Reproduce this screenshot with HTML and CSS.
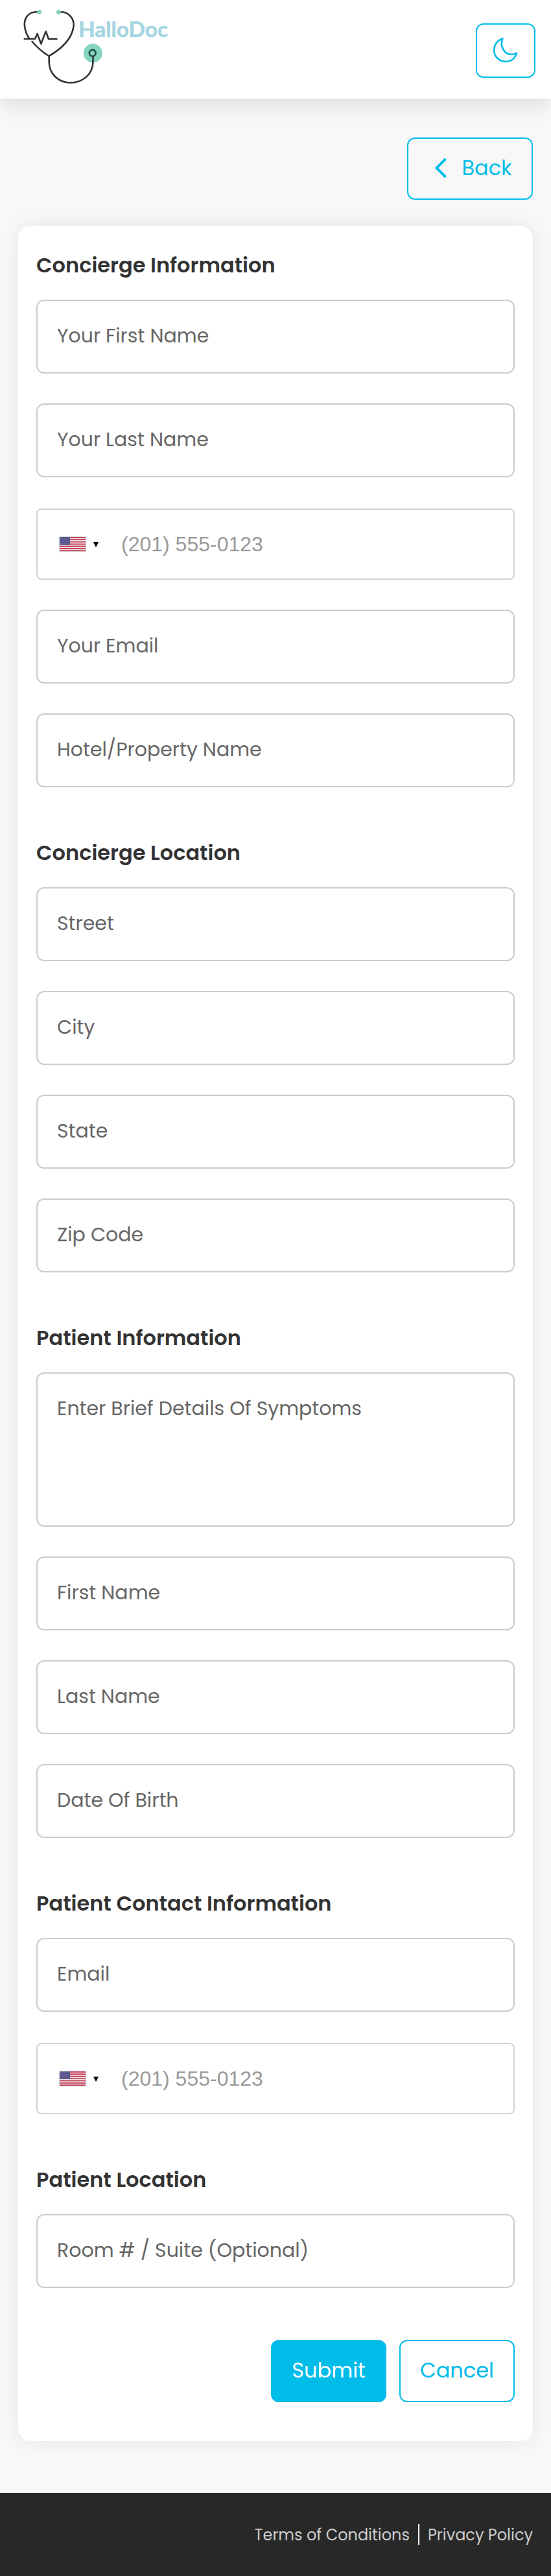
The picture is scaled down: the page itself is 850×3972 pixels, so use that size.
FILE: index.html
```html
<!DOCTYPE html>
<html lang="en">
<head>
<meta charset="utf-8">
<title>HalloDoc</title>
<link rel="stylesheet" href="styles.css">
</head>
<body>
<svg width="0" height="0" class="defs">
  <symbol id="flag-us" viewBox="0 0 40 22">
    <rect width="40" height="22" fill="#f3e6e8"/>
    <path d="M0 .85h40M0 4.2h40M0 7.6h40M0 11h40M0 14.4h40M0 17.8h40M0 21.15h40" stroke="#c03850" stroke-width="1.7"/>
    <rect width="16" height="12" fill="#54528a"/>
    <path d="M1 2h15M2 4h14M1 6h15M2 8h14M1 10h15" stroke="#8583ab" stroke-width="1" stroke-dasharray="1 2"/>
  </symbol>
</svg>
<header class="header">
  <svg class="logo" width="270" height="136" viewBox="0 0 270 136" fill="none">
    <circle cx="143.300" cy="82" r="14.500" fill="#84d5bf"/>
    <g stroke="#333" stroke-width="2.600" stroke-linecap="round" stroke-linejoin="round">
      <path d="M58 18.300C43 18 36 29 38.200 42C39.300 49 42 55 45.500 60"/>
      <path d="M93 18.300C107 18 115 30 113.500 41C111 58 97 74 75.500 86.500C65 80 57 73 49.500 64"/>
      <path d="M37.800 60H54L57.500 52L63.300 67.500L70.700 48.500L75 60.300H87.500"/>
      <path d="M75.700 86.500V95C75.700 115 91 127.500 109 127.500C128 127.500 143.500 114 143.500 95V87.500"/>
    </g>
    <circle cx="142.700" cy="81.800" r="4.900" stroke="#204c43" stroke-width="2.600"/>
    <circle cx="60.500" cy="18.800" r="3.500" fill="#84d0bb"/>
    <circle cx="90.500" cy="18.800" r="3.500" fill="#84d0bb"/>
    <text x="121" y="56.500" class="logo-text" textLength="138" lengthAdjust="spacingAndGlyphs">HalloDoc</text>
  </svg>
  <button class="btn theme" aria-label="Dark mode">
    <svg width="40" height="40" viewBox="0 0 40 40" fill="none" stroke="#00bce9" stroke-width="2.600" stroke-linejoin="round"><path d="M15.400 1.400C11 11.500 16.500 26.500 30 26C33 26 35 25.300 37 23.800C34.500 32 28.300 37 20.300 37C10.500 37 2.200 29.600 2.200 19.600C2.200 10.500 7.500 3.800 15.400 1.400Z"/></svg>
  </button>
</header>
<main class="main">
  <button class="btn back">
    <svg width="20" height="32" viewBox="0 0 20 32" fill="none" stroke="#00bce9" stroke-width="4"><path d="M17.500 2L3.500 16L17.500 30"/></svg>
    <span>Back</span>
  </button>
  <form class="card">
    <section class="group">
      <h2 class="title">Concierge Information</h2>
      <div class="field">Your First Name</div>
      <div class="field">Your Last Name</div>
      <div class="field phone"><svg class="flag" width="40" height="22"><use href="#flag-us"/></svg><i class="caret"></i><span>(201) 555-0123</span></div>
      <div class="field">Your Email</div>
      <div class="field">Hotel/Property Name</div>
    </section>
    <section class="group">
      <h2 class="title">Concierge Location</h2>
      <div class="field">Street</div>
      <div class="field">City</div>
      <div class="field">State</div>
      <div class="field">Zip Code</div>
    </section>
    <section class="group">
      <h2 class="title">Patient Information</h2>
      <div class="field area">Enter Brief Details Of Symptoms</div>
      <div class="field">First Name</div>
      <div class="field">Last Name</div>
      <div class="field">Date Of Birth</div>
    </section>
    <section class="group">
      <h2 class="title">Patient Contact Information</h2>
      <div class="field">Email</div>
      <div class="field phone"><svg class="flag" width="40" height="22"><use href="#flag-us"/></svg><i class="caret"></i><span>(201) 555-0123</span></div>
    </section>
    <section class="group">
      <h2 class="title">Patient Location</h2>
      <div class="field">Room # / Suite (Optional)</div>
    </section>
    <div class="actions">
      <button type="button" class="btn action primary">Submit</button>
      <button type="button" class="btn action">Cancel</button>
    </div>
  </form>
</main>
<footer class="footer"><a>Terms of Conditions</a><i class="divider"></i><a>Privacy Policy</a></footer>
</body>
</html>
```
FILE: styles.css
```css
* { box-sizing: border-box; }
body {
  margin: 0;
  background: #f8f8f8;
  color: #333;
  font-family: Poppins, Inter, "Open Sans", sans-serif;
}
.defs { display: block; }
.header {
  display: flex;
  justify-content: space-between;
  align-items: flex-start;
  height: 152px;
  padding-right: 24px;
  background: #fff;
  box-shadow: 0 8px 32px rgba(0, 0, 0, .12);
}
.logo-text { font: 700 32px Lato, sans-serif; fill: #a4d5e1; stroke: #a4d5e1; stroke-width: .5px; }
.btn {
  display: flex;
  align-items: center;
  justify-content: center;
  margin: 0;
  padding: 0;
  border: 2px solid #00bce9;
  border-radius: 12px;
  background: transparent;
  color: #00bce9;
  font: 400 32px/44px Poppins, Inter, sans-serif;
}
.theme { width: 92px; height: 84px; margin-top: 36px; }
.main { display: flex; flex-direction: column; padding: 60px 28px 80px; }
.back {
  align-self: flex-end;
  width: 194px;
  height: 96px;
  padding: 0 0 2px 10px;
  gap: 22px;
}
.card {
  margin-top: 40px;
  height: 3416px;
  padding: 36px 28px 60px;
  border-radius: 20px;
  background: #fff;
  box-shadow: 0 0 32px rgba(0, 0, 0, .08);
}
.group { display: flex; flex-direction: column; gap: 46px; margin-bottom: 76px; }
.title { height: 48px; margin: 0 0 -16px; font-size: 32px; line-height: 50px; font-weight: 600; }
.field {
  height: 114px;
  padding: 0 30px;
  border: 2px solid #ccc;
  border-radius: 12px;
  color: #666;
  font-size: 30px;
  line-height: 107px;
  white-space: nowrap;
}
.area { height: 238px; }
.phone {
  display: flex;
  align-items: center;
  height: 110px;
  margin-top: 2px;
  padding: 0 34px;
  border-color: #ced4da;
  border-radius: 8px;
  color: #999;
  font: 32px/106px "Liberation Sans", Arial, sans-serif;
}
.flag { flex: none; box-shadow: 0 0 2px #888; }
.caret {
  margin: 2px 35px 0 12px;
  border: 4px solid transparent;
  border-top: 8px solid #000;
  border-bottom: 0;
}
.actions { display: flex; justify-content: flex-end; gap: 20px; padding-top: 4px; }
.action { width: 178px; height: 96px; padding-bottom: 2px; }
.primary { background: #00bce9; color: #fff; }
.footer {
  display: flex;
  align-items: center;
  justify-content: flex-end;
  height: 128px;
  padding-right: 28px;
  background: #282828;
  color: #ccc;
  font-size: 24px;
}
.divider { width: 2px; height: 32px; margin: 0 13px; background: #fff; }
```
